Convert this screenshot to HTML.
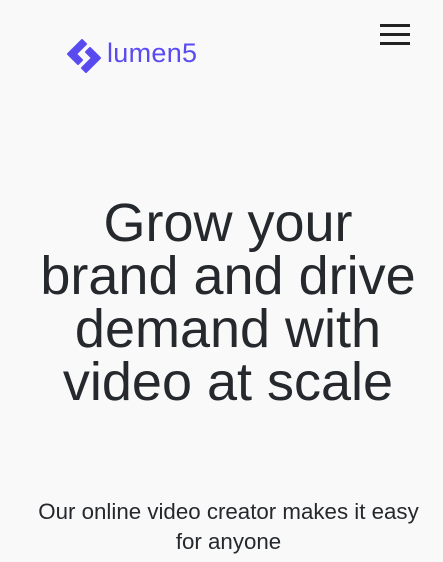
<!DOCTYPE html>
<html><head><style>
html,body{margin:0;padding:0;background:#f9f9f9;width:443px;height:562px;overflow:hidden;font-family:"Liberation Sans",Arial,sans-serif;}
.logo{position:absolute;left:66px;top:38px;}
.lt{position:absolute;left:107px;top:38px;font-size:27px;color:#5a4bf0;letter-spacing:0.3px;}
.hb{position:absolute;left:380px;width:30px;height:3px;background:#222;}
h1{position:absolute;top:197px;left:0;width:456px;margin:0;text-align:center;font-weight:400;font-size:54px;line-height:53px;color:#25282c;}
p{position:absolute;top:497px;left:0;width:457px;margin:0;text-align:center;font-size:22.3px;line-height:30px;color:#25282c;}
</style></head><body>
<svg class="logo" width="36" height="36" viewBox="0 0 36 36">
<path d="M16 2 L2 16 L12 26 L16 22 L10 16 L20 6 Z" fill="#5a4bf0" stroke="#5a4bf0" stroke-width="2" stroke-linejoin="round"/>
<path d="M20 34 L34 20 L24 10 L20 14 L26 20 L16 30 Z" fill="#5a4bf0" stroke="#5a4bf0" stroke-width="2" stroke-linejoin="round"/>
</svg>
<div class="lt">lumen5</div>
<div class="hb" style="top:24px"></div>
<div class="hb" style="top:33px"></div>
<div class="hb" style="top:42px"></div>
<h1>Grow your<br>brand and drive<br>demand with<br>video at scale</h1>
<p>Our online video creator makes it easy<br>for anyone</p>
</body></html>
